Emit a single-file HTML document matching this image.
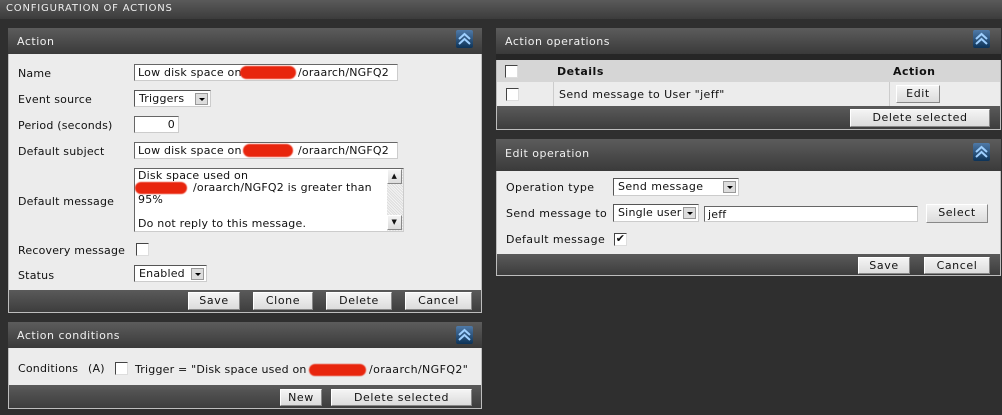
<!DOCTYPE html>
<html><head><meta charset="utf-8"><style>
*{box-sizing:border-box;margin:0;padding:0}
body{width:1002px;height:415px;background:#2f2f2f;font-family:"DejaVu Sans","Liberation Sans",sans-serif;font-size:11px;color:#111;position:relative;overflow:hidden;letter-spacing:.2px}
.a{position:absolute}
.top{left:0;top:0;width:1002px;height:19px;background:linear-gradient(#5a5a5a,#3c3c3c);color:#eee;font-size:10px;padding:3px 0 0 6px;letter-spacing:.8px}
.hdr{background:linear-gradient(#5c5c5c,#3a3a3a);color:#f0f0f0;padding:7px 0 0 9px;font-size:11px;height:26px;letter-spacing:.5px}
.body{background:#ececec}
.ftr{background:linear-gradient(#5a5a5a,#3d3d3d)}
.pb{border:1px solid #bdbdbd;border-top:none}
.ic{width:17px;height:18px;border-radius:2px;background:linear-gradient(#4f7aa8,#0d3358)}
.ic svg{display:block}
.inp{background:#fff;border:1px solid #666;border-right-color:#ccc;border-bottom-color:#ccc;padding:1px 3px;white-space:nowrap;overflow:hidden;line-height:13px}
.sel{background:#fff;border:1px solid #555;border-right-color:#ccc;border-bottom-color:#ccc;padding:1px 4px;line-height:13px}
.sel .ar{position:absolute;right:2px;top:2px;width:13px;height:12px;background:#ddd;border:1px solid #999}
.sel .ar:after{content:"";position:absolute;left:3px;top:4px;border:3px solid transparent;border-top:3px solid #000}
.btn{background:linear-gradient(#f4f4f4,#dcdcdc);border:1px solid #888;border-top-color:#fff;border-left-color:#fff;text-align:center;line-height:16px;font-size:11px;letter-spacing:.6px}
.cb{width:13px;height:13px;background:#fff;border:1px solid #444;border-right-color:#ddd;border-bottom-color:#ddd}
.red{background:#e8250d;border-radius:8px;filter:blur(.5px)}
</style></head><body>
<div class="a top">CONFIGURATION OF ACTIONS</div>

<div class="a hdr" style="left:8px;top:28px;width:474px">Action</div>
<div class="a ic" style="left:456px;top:30px"><svg width="17" height="18"><path d="M3 9 L8.5 4 L14 9 M3 14 L8.5 9 L14 14" stroke="#9fd0ff" stroke-width="2" fill="none"/></svg></div>
<div class="a body pb" style="left:8px;top:54px;width:474px;height:259px"></div>
<div class="a" style="left:18px;top:67px">Name</div>
<div class="a inp" style="left:134px;top:64px;width:264px;height:17px">Low disk space on</div>
<div class="a" style="left:298px;top:66px">/oraarch/NGFQ2</div>
<div class="a red" style="left:240px;top:66px;width:56px;height:13px"></div>
<div class="a" style="left:18px;top:93px">Event source</div>
<div class="a sel" style="left:134px;top:90px;width:77px;height:17px">Triggers<span class="ar"></span></div>
<div class="a" style="left:18px;top:119px">Period (seconds)</div>
<div class="a inp" style="left:134px;top:116px;width:45px;height:17px;text-align:right">0</div>
<div class="a" style="left:18px;top:145px">Default subject</div>
<div class="a inp" style="left:134px;top:142px;width:264px;height:17px">Low disk space on</div>
<div class="a" style="left:298px;top:144px">/oraarch/NGFQ2</div>
<div class="a red" style="left:243px;top:144px;width:50px;height:13px"></div>
<div class="a" style="left:18px;top:195px">Default message</div>
<div class="a inp" style="left:134px;top:168px;width:270px;height:64px;line-height:12px;white-space:pre;padding-top:1px">Disk space used on

95%

Do not reply to this message.</div>
<div class="a" style="left:193px;top:181px">/oraarch/NGFQ2 is greater than</div>
<div class="a red" style="left:135px;top:182px;width:52px;height:12px"></div>
<div class="a" style="left:387px;top:169px;width:16px;height:62px;background:repeating-linear-gradient(45deg,#ddd 0 1px,#f4f4f4 1px 2px)"></div>
<div class="a btn" style="left:387px;top:169px;width:15px;height:15px;font-size:7px;line-height:13px">▲</div>
<div class="a btn" style="left:387px;top:215px;width:15px;height:15px;font-size:7px;line-height:13px">▼</div>
<div class="a" style="left:18px;top:244px">Recovery message</div>
<div class="a cb" style="left:136px;top:243px"></div>
<div class="a" style="left:18px;top:269px">Status</div>
<div class="a sel" style="left:134px;top:265px;width:73px;height:17px">Enabled<span class="ar"></span></div>
<div class="a ftr" style="left:9px;top:290px;width:472px;height:22px"></div>
<div class="a btn" style="left:188px;top:292px;width:52px;height:18px">Save</div>
<div class="a btn" style="left:253px;top:292px;width:60px;height:18px">Clone</div>
<div class="a btn" style="left:326px;top:292px;width:66px;height:18px">Delete</div>
<div class="a btn" style="left:405px;top:292px;width:67px;height:18px">Cancel</div>

<div class="a hdr" style="left:8px;top:322px;width:474px">Action conditions</div>
<div class="a ic" style="left:456px;top:326px"><svg width="17" height="18"><path d="M3 9 L8.5 4 L14 9 M3 14 L8.5 9 L14 14" stroke="#9fd0ff" stroke-width="2" fill="none"/></svg></div>
<div class="a body pb" style="left:8px;top:348px;width:474px;height:61px"></div>
<div class="a" style="left:18px;top:362px">Conditions</div>
<div class="a" style="left:88px;top:362px">(A)</div>
<div class="a cb" style="left:115px;top:362px"></div>
<div class="a" style="left:135px;top:363px;letter-spacing:.2px">Trigger = "Disk space used on</div>
<div class="a" style="left:369px;top:363px;letter-spacing:.4px">/oraarch/NGFQ2"</div>
<div class="a red" style="left:309px;top:364px;width:57px;height:12px"></div>
<div class="a ftr" style="left:9px;top:385px;width:472px;height:23px"></div>
<div class="a btn" style="left:280px;top:389px;width:42px;height:17px">New</div>
<div class="a btn" style="left:331px;top:389px;width:141px;height:17px">Delete selected</div>

<div class="a hdr" style="left:496px;top:28px;width:505px">Action operations</div>
<div class="a ic" style="left:973px;top:30px"><svg width="17" height="18"><path d="M3 9 L8.5 4 L14 9 M3 14 L8.5 9 L14 14" stroke="#9fd0ff" stroke-width="2" fill="none"/></svg></div>
<div class="a" style="left:496px;top:54px;width:505px;height:6px;background:#262626"></div>
<div class="a pb" style="left:496px;top:60px;width:505px;height:70px;background:#3f3f3f"></div>
<div class="a" style="left:497px;top:60px;width:503px;height:22px;background:#d6d6d6"></div>
<div class="a body" style="left:497px;top:82px;width:503px;height:24px"></div>
<div class="a" style="left:553px;top:82px;width:1px;height:24px;background:#ccc"></div>
<div class="a" style="left:889px;top:82px;width:1px;height:24px;background:#ccc"></div>
<div class="a cb" style="left:505px;top:65px"></div>
<div class="a" style="left:557px;top:65px;font-weight:bold;letter-spacing:.5px">Details</div>
<div class="a" style="left:893px;top:65px;font-weight:bold;letter-spacing:.5px">Action</div>
<div class="a cb" style="left:506px;top:88px"></div>
<div class="a" style="left:559px;top:88px;letter-spacing:.4px">Send message to User "jeff"</div>
<div class="a btn" style="left:896px;top:85px;width:44px;height:18px">Edit</div>
<div class="a ftr" style="left:497px;top:106px;width:503px;height:23px"></div>
<div class="a btn" style="left:850px;top:109px;width:140px;height:18px">Delete selected</div>

<div class="a hdr" style="left:496px;top:139px;width:505px;height:32px;padding-top:8px">Edit operation</div>
<div class="a ic" style="left:973px;top:143px"><svg width="17" height="18"><path d="M3 9 L8.5 4 L14 9 M3 14 L8.5 9 L14 14" stroke="#9fd0ff" stroke-width="2" fill="none"/></svg></div>
<div class="a body pb" style="left:496px;top:171px;width:505px;height:105px"></div>
<div class="a" style="left:506px;top:181px;letter-spacing:.4px">Operation type</div>
<div class="a sel" style="left:613px;top:178px;width:126px;height:18px;letter-spacing:.4px">Send message<span class="ar"></span></div>
<div class="a" style="left:506px;top:207px;letter-spacing:.4px">Send message to</div>
<div class="a sel" style="left:613px;top:204px;width:86px;height:18px">Single user<span class="ar"></span></div>
<div class="a inp" style="left:704px;top:206px;width:214px;height:16px">jeff</div>
<div class="a btn" style="left:926px;top:204px;width:62px;height:19px">Select</div>
<div class="a" style="left:506px;top:233px;letter-spacing:.4px">Default message</div>
<div class="a cb" style="left:614px;top:233px;font-size:11px;line-height:10px;text-align:center">✔</div>
<div class="a ftr" style="left:497px;top:254px;width:503px;height:21px"></div>
<div class="a btn" style="left:858px;top:257px;width:52px;height:17px">Save</div>
<div class="a btn" style="left:924px;top:257px;width:66px;height:17px">Cancel</div>
</body></html>
